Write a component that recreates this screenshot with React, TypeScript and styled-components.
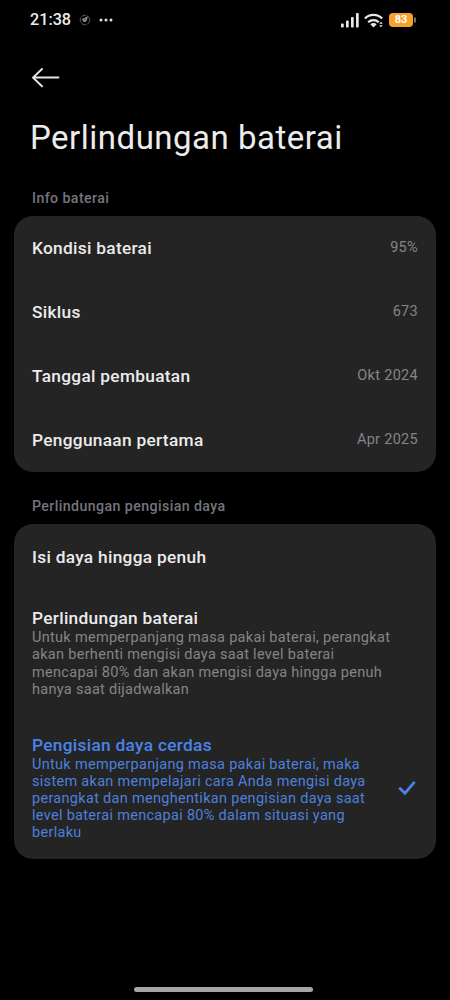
import React from 'react';
import styled, { createGlobalStyle } from 'styled-components';

const GlobalStyle = createGlobalStyle`
  * { box-sizing: border-box; }
  body { margin: 0; background: #000; font-family: Roboto, "Liberation Sans", sans-serif; }
`;

const Screen = styled.div`
  display: flex;
  flex-direction: column;
  width: 450px;
  height: 1000px;
  background: #000;
  color: #ececec;
  overflow: hidden;
`;

const StatusBar = styled.header`
  display: flex;
  justify-content: space-between;
  align-items: center;
  height: 40px;
  padding: 0 34px 0 30px;
`;

const StatusGroup = styled.div<{ $gap: number }>`
  display: flex;
  align-items: center;
  gap: ${({ $gap }) => $gap}px;
`;

const Clock = styled.span`
  width: 41px;
  font-size: 16.2px;
  line-height: 20px;
  font-weight: 500;
  white-space: nowrap;
`;

const BackButton = styled.button`
  display: flex;
  width: 30px;
  height: 24px;
  margin: 26px 0 0 31px;
  padding: 0;
  border: 0;
  background: none;
  color: #e6e4e4;
`;

const PageTitle = styled.h1`
  margin: 26px 0 0 30px;
  font-size: 33px;
  line-height: 44px;
  font-weight: 400;
  letter-spacing: 0.5px;
  white-space: nowrap;
`;

const SectionTitle = styled.h2<{ $top: number }>`
  margin: ${({ $top }) => $top}px 0 0 32px;
  height: 36px;
  font-size: 14.2px;
  line-height: 20px;
  font-weight: 500;
  letter-spacing: 0.4px;
  color: #74757d;
`;

const Card = styled.section`
  display: flex;
  flex-direction: column;
  margin: 0 14px;
  border-radius: 19px;
  background: #242424;
`;

const InfoRow = styled.div`
  display: flex;
  align-items: center;
  justify-content: space-between;
  height: 64px;
  padding: 0 18px;
`;

const Label = styled.span`
  display: block;
  font-size: 17.3px;
  line-height: 22px;
  font-weight: 500;
  letter-spacing: 0.3px;
`;

const Value = styled.span`
  font-size: 14.5px;
  line-height: 20px;
  letter-spacing: 0.3px;
  color: #858585;
`;

const OptionRow = styled.div<{ $selected?: boolean; $height: number }>`
  display: flex;
  align-items: center;
  justify-content: space-between;
  height: ${({ $height }) => $height}px;
  padding: 0 20px 0 18px;
  color: ${({ $selected }) => ($selected ? '#4a83ea' : '#ececec')};
`;

const Description = styled.p<{ $selected?: boolean }>`
  margin: 0;
  font-size: 14.5px;
  line-height: 17.15px;
  letter-spacing: 0.3px;
  white-space: pre-line;
  color: ${({ $selected }) => ($selected ? '#4d80dc' : '#858585')};
`;

const HomeIndicator = styled.div`
  width: 179px;
  height: 5px;
  margin: auto auto 8px 134px;
  border-radius: 3px;
  background: #a5a5a5;
`;

const BatteryBody = styled.span`
  display: flex;
  align-items: center;
  justify-content: center;
  width: 24px;
  height: 14px;
  border-radius: 4px;
  background: #f7a229;
  color: #fff;
  font-size: 11px;
  line-height: 14px;
  font-weight: 700;
`;

const BatteryTip = styled.span`
  width: 2px;
  height: 6px;
  border-radius: 0 2px 2px 0;
  background: #77726b;
`;

const Battery = styled.div`
  display: flex;
  align-items: center;
  gap: 1px;
`;

const infoRows = [
  ['Kondisi baterai', '95%'],
  ['Siklus', '673'],
  ['Tanggal pembuatan', 'Okt 2024'],
  ['Penggunaan pertama', 'Apr 2025'],
];

const options = [
  { title: 'Isi daya hingga penuh', height: 65 },
  {
    title: 'Perlindungan baterai',
    height: 127,
    text: 'Untuk memperpanjang masa pakai baterai, perangkat\nakan berhenti mengisi daya saat level baterai\nmencapai 80% dan akan mengisi daya hingga penuh\nhanya saat dijadwalkan',
  },
  {
    title: 'Pengisian daya cerdas',
    height: 143,
    selected: true,
    text: 'Untuk memperpanjang masa pakai baterai, maka\nsistem akan mempelajari cara Anda mengisi daya\nperangkat dan menghentikan pengisian daya saat\nlevel baterai mencapai 80% dalam situasi yang\nberlaku',
  },
];

const NotificationIcon = () => (
  <svg width="12" height="12" viewBox="0 0 12 12" fill="none">
    <circle cx="6" cy="6" r="4.8" stroke="#626866" strokeWidth="0.9" strokeDasharray="5 1" />
    <path d="M3 5.3 5 4l3.8-1.7-.9 3.9L6.4 8 4.2 7.4Z" fill="#8c9390" />
    <path d="m5 5.8 1.8-1.1" stroke="#222" strokeWidth="0.8" />
  </svg>
);

const MoreDots = () => (
  <svg width="14" height="4" viewBox="0 0 14 4" fill="#dedede">
    <circle cx="2" cy="2" r="1.5" />
    <circle cx="7" cy="2" r="1.5" />
    <circle cx="12" cy="2" r="1.5" />
  </svg>
);

const SignalIcon = () => (
  <svg width="18" height="15" viewBox="0 0 18 15" fill="#e9e9e9">
    <rect x="0" y="10.5" width="2.7" height="4" rx="0.8" />
    <rect x="5" y="7.5" width="2.7" height="7" rx="0.8" />
    <rect x="10" y="4" width="2.7" height="10.5" rx="0.8" />
    <rect x="15" y="0" width="2.7" height="14.5" rx="0.8" />
  </svg>
);

const WifiIcon = () => (
  <svg width="20" height="15" viewBox="0 0 20 15" fill="none" stroke="#e9e9e9" strokeWidth="2.2">
    <path d="M.9 5.5a12 12 0 0 1 17.2 0" />
    <path d="M4.2 9.2a7.6 7.6 0 0 1 10.6 0" />
    <path d="M6.3 11.3a4.6 4.6 0 0 1 6.4 0L9.5 14.5Z" fill="#e9e9e9" stroke="none" />
    <path d="m15.2 10.8 1.8-2 1.8 2ZM15.2 12.2l1.8 2 1.8-2Z" fill="#e9e9e9" stroke="none" />
  </svg>
);

const BackIcon = () => (
  <svg width="30" height="24" viewBox="0 0 30 24" fill="none" stroke="currentColor" strokeWidth="2" strokeLinecap="round" strokeLinejoin="round">
    <path d="M27.4 11.6H2M11 3 2 11.6 11 20.3" />
  </svg>
);

const CheckIcon = () => (
  <svg width="18" height="16" viewBox="0 0 18 16" fill="none" stroke="#4a83ea" strokeWidth="2.7">
    <path d="M1.2 7.8 7 13.2 16.6 1.8" />
  </svg>
);

export default function App() {
  return (
    <Screen>
      <GlobalStyle />
      <StatusBar>
        <StatusGroup $gap={8}>
          <Clock>21:38</Clock>
          <NotificationIcon />
          <MoreDots />
        </StatusGroup>
        <StatusGroup $gap={5}>
          <SignalIcon />
          <WifiIcon />
          <Battery>
            <BatteryBody>83</BatteryBody>
            <BatteryTip />
          </Battery>
        </StatusGroup>
      </StatusBar>
      <BackButton aria-label="Kembali">
        <BackIcon />
      </BackButton>
      <PageTitle>Perlindungan baterai</PageTitle>
      <SectionTitle $top={28}>Info baterai</SectionTitle>
      <Card style={{ marginTop: -8 }}>
        {infoRows.map(([label, value]) => (
          <InfoRow key={label}>
            <Label>{label}</Label>
            <Value>{value}</Value>
          </InfoRow>
        ))}
      </Card>
      <SectionTitle $top={24}>Perlindungan pengisian daya</SectionTitle>
      <Card style={{ marginTop: -8 }}>
        {options.map(({ title, text, selected, height }) => (
          <OptionRow key={title} $selected={selected} $height={height}>
            <div>
              <Label>{title}</Label>
              {text && <Description $selected={selected}>{text}</Description>}
            </div>
            {selected && <CheckIcon />}
          </OptionRow>
        ))}
      </Card>
      <HomeIndicator />
    </Screen>
  );
}
